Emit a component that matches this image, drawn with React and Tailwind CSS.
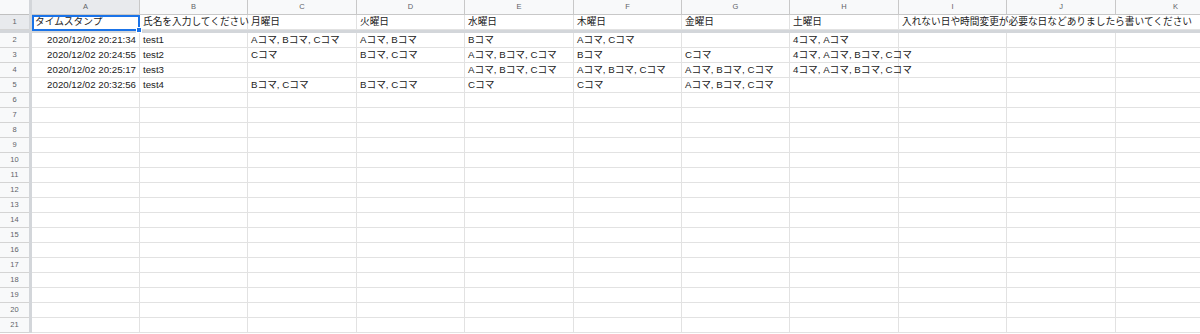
import React from 'react';

const widths = [108, 108, 109, 108, 109, 108, 108, 109, 108, 109, 120];
const letters = ['A', 'B', 'C', 'D', 'E', 'F', 'G', 'H', 'I', 'J', 'K'];

const header = [
  'タイムスタンプ',
  '氏名を入力してください',
  '月曜日',
  '火曜日',
  '水曜日',
  '木曜日',
  '金曜日',
  '土曜日',
  '入れない日や時間変更が必要な日などありましたら書いてください',
  '',
  '',
];

const rows = [
  ['2020/12/02 20:21:34', 'test1', 'Aコマ, Bコマ, Cコマ', 'Aコマ, Bコマ', 'Bコマ', 'Aコマ, Cコマ', '', '4コマ, Aコマ'],
  ['2020/12/02 20:24:55', 'test2', 'Cコマ', 'Bコマ, Cコマ', 'Aコマ, Bコマ, Cコマ', 'Bコマ', 'Cコマ', '4コマ, Aコマ, Bコマ, Cコマ'],
  ['2020/12/02 20:25:17', 'test3', '', '', 'Aコマ, Bコマ, Cコマ', 'Aコマ, Bコマ, Cコマ', 'Aコマ, Bコマ, Cコマ', '4コマ, Aコマ, Bコマ, Cコマ'],
  ['2020/12/02 20:32:56', 'test4', 'Bコマ, Cコマ', 'Bコマ, Cコマ', 'Cコマ', 'Cコマ', 'Aコマ, Bコマ, Cコマ', ''],
];

const font = { fontFamily: '"Liberation Sans", "Noto Sans CJK JP", Arial, sans-serif' };

const RowNum = ({ n, active }) => (
  <div
    className={`w-[29px] shrink-0 flex items-center justify-center text-[7.5px] text-[#5f6368] border-b border-[#d4d4d4] ${
      active ? 'bg-[#e8eaed]' : 'bg-[#f8f9fa]'
    }`}
  >
    {n}
  </div>
);

const Freeze = () => <div className="w-[3px] shrink-0 bg-[#d3d6da]" />;

const Cell = ({ w, children, right, noBorder }) => (
  <div
    style={{ width: w }}
    className={`shrink-0 h-full flex items-center whitespace-nowrap text-[9.7px] text-[#222] border-b border-[#e2e2e2] ${
      noBorder ? '' : 'border-r'
    } ${right ? 'justify-end pr-[3px]' : 'pl-[3px]'}`}
  >
    {children}
  </div>
);

export default function App() {
  return (
    <div className="w-[1200px] h-[334px] overflow-hidden bg-white relative" style={font}>
      {/* column letters */}
      <div className="flex h-[15px]">
        <div className="w-[29px] shrink-0 bg-[#f8f9fa] border-b border-[#c0c0c0]" />
        <Freeze />
        {letters.map((l, i) => (
          <div
            key={l}
            style={{ width: widths[i] }}
            className={`shrink-0 flex items-center justify-center text-[7.5px] text-[#5f6368] border-r border-b border-[#c8c8c8] ${
              i === 0 ? 'bg-[#e8eaed]' : 'bg-[#f8f9fa]'
            }`}
          >
            {l}
          </div>
        ))}
      </div>

      {/* row 1 */}
      <div className="flex h-[15px]">
        <RowNum n={1} active />
        <Freeze />
        {header.map((t, i) => (
          <Cell key={i} w={widths[i]} noBorder={i === 8 || i === 9}>
            {t}
          </Cell>
        ))}
      </div>

      <div className="h-[3px] bg-[#d3d6da]" />

      {Array.from({ length: 20 }, (_, r) => {
        const data = rows[r] || [];
        return (
          <div key={r} className="flex h-[15px]">
            <RowNum n={r + 2} />
            <Freeze />
            {widths.map((w, i) => (
              <Cell key={i} w={w} right={i === 0}>
                {data[i] || ''}
              </Cell>
            ))}
          </div>
        );
      })}

      {/* A1 selection */}
      <div className="absolute left-[32px] top-[15px] w-[108px] h-[16px] border-2 border-[#1a73e8] pointer-events-none" />
      <div className="absolute left-[136px] top-[27px] w-[6px] h-[6px] bg-[#1a73e8] border border-white" />
    </div>
  );
}
